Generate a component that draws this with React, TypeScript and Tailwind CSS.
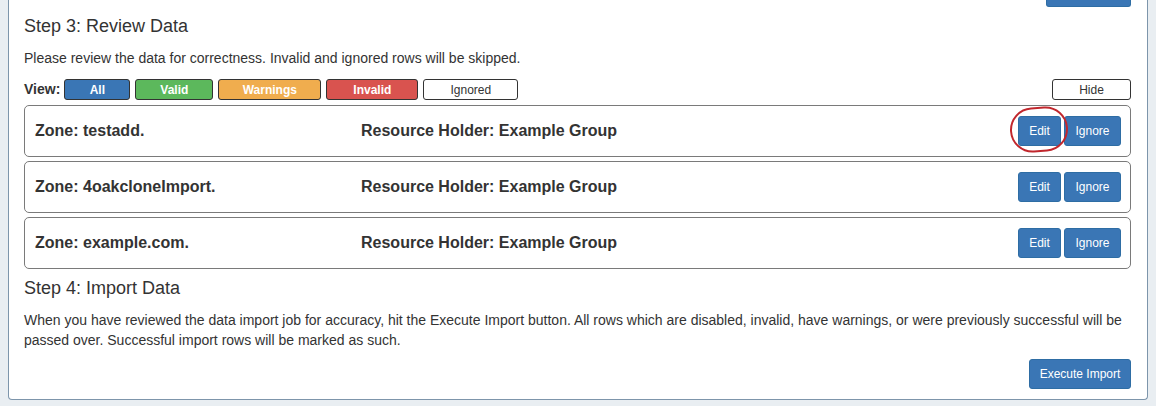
import React from "react";

const filters = [
  { label: "All", cls: "w-[66px] bg-[#3a76b5] text-white font-bold" },
  { label: "Valid", cls: "w-[78px] bg-[#5cb85c] text-white font-bold" },
  { label: "Warnings", cls: "w-[103px] bg-[#f0ad4e] text-white font-bold" },
  { label: "Invalid", cls: "w-[92px] bg-[#d9534f] text-white font-bold" },
  { label: "Ignored", cls: "w-[95px] bg-white text-[#333]" },
];

const rows = ["testadd.", "4oakcloneImport.", "example.com."];

export default function App() {
  return (
    <div className="w-[1156px] h-[406px] overflow-hidden bg-[#e9eef2] font-['Liberation_Sans',Arial,sans-serif] text-[#333]">
      <div className="ml-[8px] w-[1140px] bg-white border-x border-b border-[#7d95ab] rounded-b-[4px] pl-[15px] pr-[16px] pb-[10px]">
        <div className="h-[7px] flex justify-end">
          <div className="w-[85px] h-[7px] bg-[#3a76b5] rounded-b-[3px] border-x border-b border-[#2e6da4]" />
        </div>
        <h2 className="mt-[9px] h-[20px] text-[18px] leading-[20px] font-normal">Step 3: Review Data</h2>
        <p className="mt-[13px] text-[14px] leading-[18px]">
          Please review the data for correctness. Invalid and ignored rows will be skipped.
        </p>
        <div className="mt-[12px] h-[21px] flex items-center">
          <span className="text-[14px] font-bold mr-[4px]">View:</span>
          <div className="flex gap-[5px]">
            {filters.map((f) => (
              <button
                key={f.label}
                className={`h-[21px] text-[12px] leading-none border border-[#333] rounded-[3px] ${f.cls}`}
              >
                {f.label}
              </button>
            ))}
          </div>
          <div className="flex-1" />
          <button className="w-[79px] h-[21px] text-[12px] leading-none bg-white text-[#333] border border-[#333] rounded-[3px]">
            Hide
          </button>
        </div>
        <div className="mt-[5px] flex flex-col gap-[4px]">
          {rows.map((z, i) => (
            <div
              key={z}
              className="h-[52px] border border-[#7a7a7a] rounded-[5px] flex items-center pl-[10px] pr-[9px]"
            >
              <div className="w-[326px] text-[16px] font-bold">Zone: {z}</div>
              <div className="flex-1 text-[16px] font-bold">Resource Holder: Example Group</div>
              <div className="flex gap-[3px]">
                <div className="relative">
                  <button className="w-[43px] h-[30px] bg-[#3a76b5] border border-[#2e6da4] rounded-[3px] text-white text-[12px]">
                    Edit
                  </button>
                  {i === 0 && (
                    <div className="absolute -left-[8px] -top-[9px] w-[58px] h-[45px] rounded-full border-2 border-[#c1272d] -rotate-[4deg]" />
                  )}
                </div>
                <button className="w-[57px] h-[30px] bg-[#3a76b5] border border-[#2e6da4] rounded-[3px] text-white text-[12px]">
                  Ignore
                </button>
              </div>
            </div>
          ))}
        </div>
        <h2 className="mt-[9px] h-[20px] text-[18px] leading-[20px] font-normal">Step 4: Import Data</h2>
        <p className="mt-[12px] text-[14px] leading-[20px]">
          When you have reviewed the data import job for accuracy, hit the Execute Import button. All rows which are disabled, invalid, have warnings, or were previously successful will be passed over. Successful import rows will be marked as such.
        </p>
        <div className="mt-[9px] flex justify-end">
          <button className="w-[102px] h-[30px] bg-[#3a76b5] border border-[#2e6da4] rounded-[3px] text-white text-[12px]">
            Execute Import
          </button>
        </div>
      </div>
    </div>
  );
}
